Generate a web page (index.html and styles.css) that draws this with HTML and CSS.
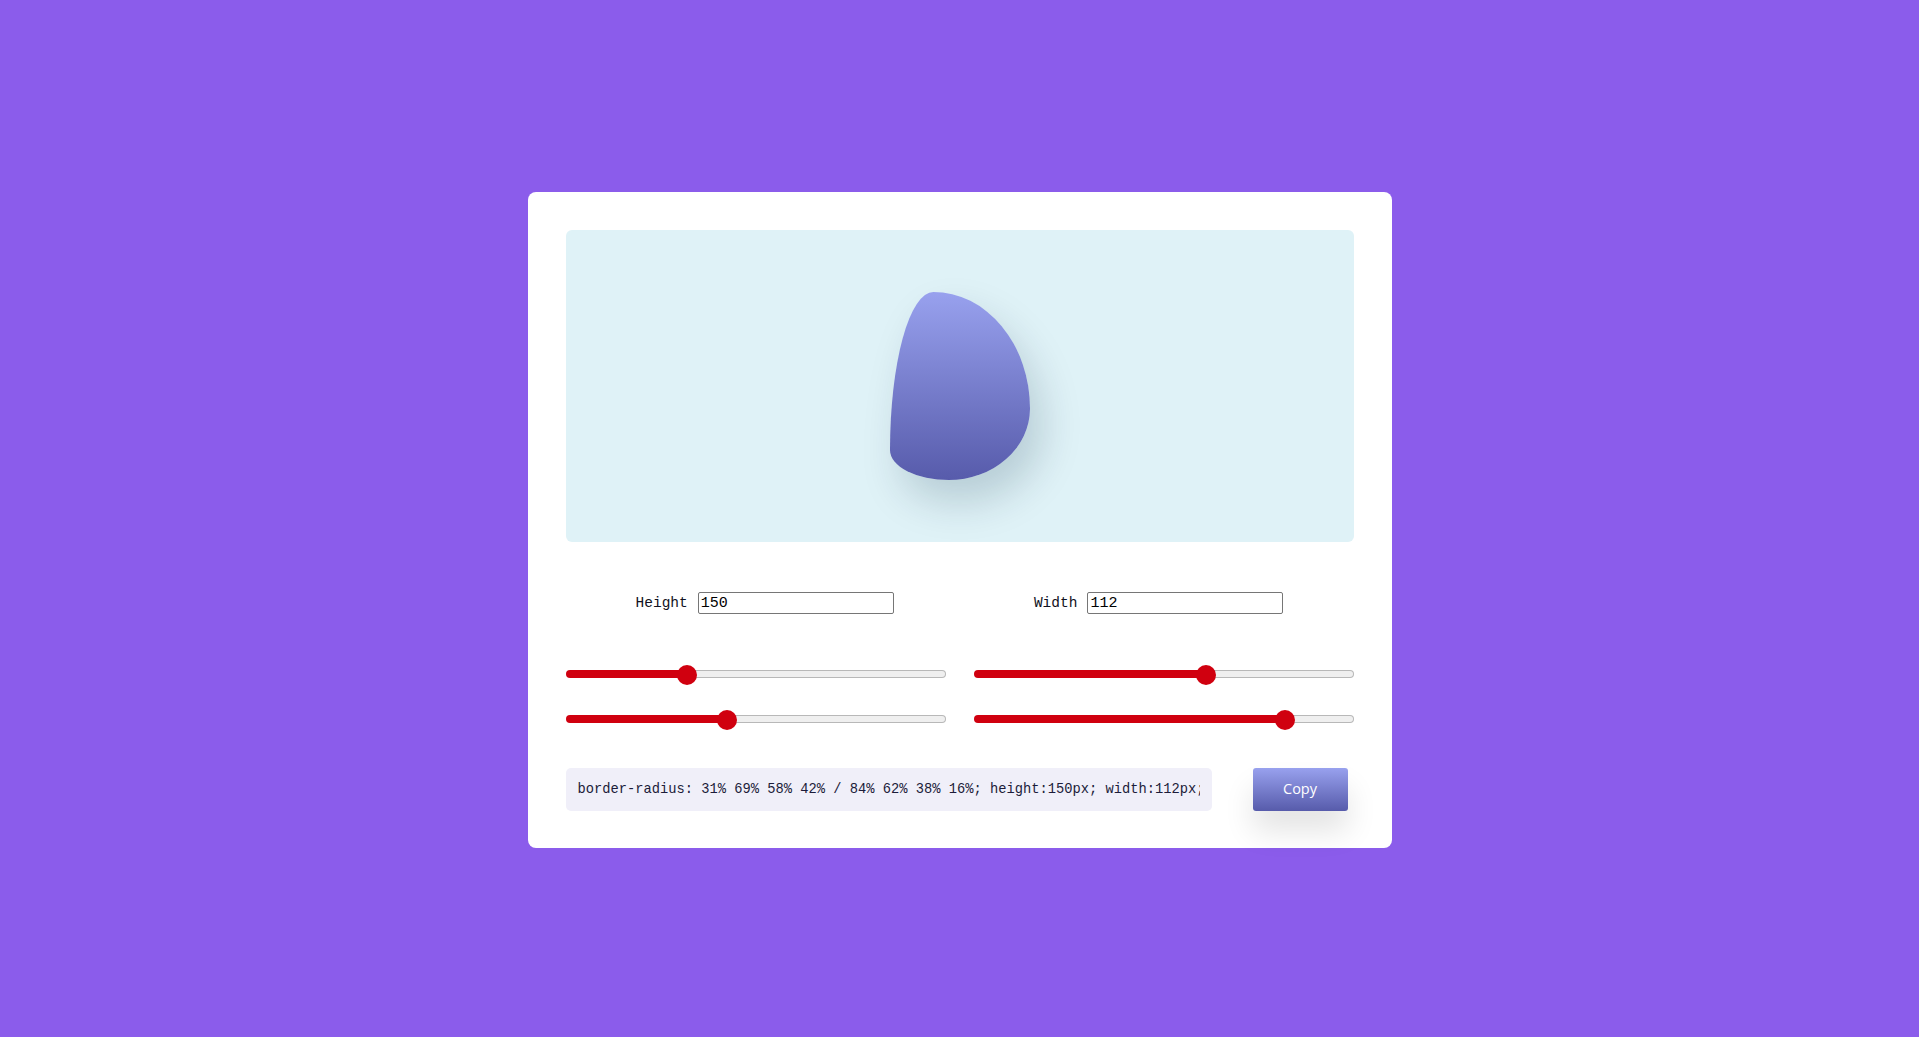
FILE: index.html
```html
<!DOCTYPE html>
<html lang="en">
<head>
<meta charset="utf-8">
<title>Blob Generator</title>
<link rel="stylesheet" href="styles.css">
</head>
<body>
<main class="card">
  <section class="preview">
    <div class="blob"></div>
  </section>
  <section class="dims">
    <label class="dim"><span class="dim-label">Height</span><input class="dim-input" type="text" value="150"></label>
    <label class="dim"><span class="dim-label">Width</span><input class="dim-input" type="text" value="112"></label>
  </section>
  <section class="sliders">
    <input class="slider" type="range" min="0" max="100" value="31" style="--v:0.31">
    <input class="slider" type="range" min="0" max="100" value="62" style="--v:0.62">
    <input class="slider" type="range" min="0" max="100" value="42" style="--v:0.42">
    <input class="slider" type="range" min="0" max="100" value="84" style="--v:0.84">
  </section>
  <section class="output">
    <input class="code" type="text" readonly value="border-radius: 31% 69% 58% 42% / 84% 62% 38% 16%; height:150px; width:112px;">
    <button class="copy" type="button">Copy</button>
  </section>
</main>
</body>
</html>
```
FILE: styles.css
```css
* { box-sizing: border-box; }
html, body { margin: 0; padding: 0; }
body {
  min-height: 100vh;
  background: #8b5ceb;
  display: flex;
  align-items: center;
  justify-content: center;
  font-family: "Liberation Mono", "DejaVu Sans Mono", monospace;
}
.card {
  width: 864px;
  background: #ffffff;
  border-radius: 8px;
  padding: 38px 38px 37px;
  margin-top: 3px;
}
.preview {
  height: 312px;
  background: #dff2f7;
  border-radius: 6px;
  display: flex;
  align-items: center;
  justify-content: center;
}
.blob {
  width: 140px;
  height: 188px;
  border-radius: 31% 69% 58% 42% / 84% 62% 38% 16%;
  background: linear-gradient(to bottom, #98a1ee, #575bab);
  box-shadow: 12px 22px 40px rgba(0, 40, 60, 0.18);
}
.dims {
  margin-top: 50px;
  display: flex;
  justify-content: space-around;
}
.dim {
  display: flex;
  align-items: center;
  gap: 10px;
}
.dim-label {
  font-size: 14.5px;
  color: #111122;
}
.dim-input {
  width: 196px;
  height: 22px;
  border: 1px solid #767676;
  border-radius: 2px;
  padding: 1px 2px;
  font-family: "Liberation Mono", "DejaVu Sans Mono", monospace;
  font-size: 15px;
  color: #000;
  background: #fff;
  outline: none;
}
.sliders {
  margin-top: 50px;
  display: grid;
  grid-template-columns: 380px 380px;
  column-gap: 28px;
  row-gap: 25px;
}
.slider {
  -webkit-appearance: none;
  appearance: none;
  display: block;
  width: 380px;
  height: 20px;
  margin: 0;
  padding: 0;
  background: transparent;
}
.slider:focus { outline: none; }
.slider::-webkit-slider-runnable-track {
  height: 8px;
  border: 1px solid transparent;
  border-radius: 5px;
  background:
    linear-gradient(to right, #d0000f 0, #d0000f calc(11px + (100% - 22px) * var(--v)), transparent calc(11px + (100% - 22px) * var(--v))) border-box,
    linear-gradient(#efefef, #efefef) padding-box,
    linear-gradient(#b8b8b8, #b8b8b8) border-box;
}
.slider::-webkit-slider-thumb {
  -webkit-appearance: none;
  appearance: none;
  width: 20px;
  height: 20px;
  margin-top: -6px;
  border: none;
  border-radius: 50%;
  background: #d0000f;
}
.output {
  margin-top: 39px;
  display: flex;
  align-items: center;
  justify-content: space-between;
}
.code {
  width: 646px;
  height: 43px;
  border: none;
  border-radius: 5px;
  background: #f0eff9;
  padding: 0 12px;
  font-family: "Liberation Mono", "DejaVu Sans Mono", monospace;
  font-size: 13.75px;
  color: #1c1c3a;
  outline: none;
}
.copy {
  width: 95px;
  height: 43px;
  margin-right: 6px;
  padding: 0 0 2px;
  border: none;
  border-radius: 3px;
  background: linear-gradient(to bottom, #98a1ee, #575bab);
  color: #ffffff;
  font-family: "Open Sans", "Noto Sans", sans-serif;
  font-size: 14.5px;
  box-shadow: 0 20px 30px rgba(0, 0, 0, 0.11);
  cursor: pointer;
}
```
